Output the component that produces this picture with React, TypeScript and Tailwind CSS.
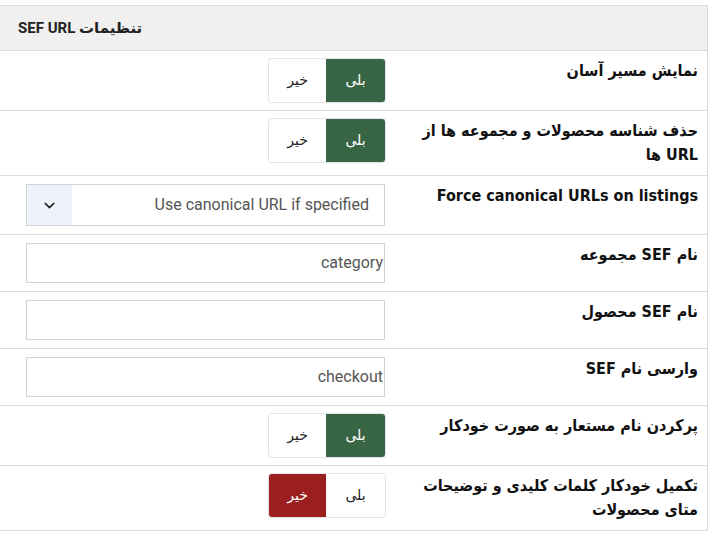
import React from "react";
import { ChevronDown } from "lucide-react";

function Toggle({ on }: { on: boolean }) {
  return (
    <div dir="rtl" className="flex h-[43px] w-[116px] rounded-[3px] overflow-hidden shadow-[0_0_0_1px_#e1e3e8,0_1px_2px_rgba(0,0,0,0.06)] text-[14px]">
      <div
        className={
          on
            ? "flex w-[59px] items-center justify-center bg-[#386543] text-white"
            : "flex w-[59px] items-center justify-center bg-white text-[#222]"
        }
      >
        بلی
      </div>
      <div
        className={
          on
            ? "flex flex-1 items-center justify-center bg-white text-[#222]"
            : "flex flex-1 items-center justify-center bg-[#9c1f1f] text-white"
        }
      >
        خیر
      </div>
    </div>
  );
}

function TextInput({ value }: { value: string }) {
  return (
    <div dir="rtl" className="flex h-[40px] w-[359px] items-center border border-[#ced2d9] bg-white pr-[1px] text-[16px] text-[#555]">
      {value}
    </div>
  );
}

function Select() {
  return (
    <div dir="rtl" className="flex h-[42px] w-[359px] border border-[#ced2d9] bg-white text-[16px] text-[#555]">
      <div className="flex flex-1 items-center pr-[15px]">Use canonical URL if specified</div>
      <div className="flex w-[45px] items-center justify-center bg-[#eef3fb] text-[#222]">
        <ChevronDown size={17} strokeWidth={2.2} />
      </div>
    </div>
  );
}

function Row({ label, children, last }: { label: React.ReactNode; children: React.ReactNode; last?: boolean }) {
  return (
    <div dir="rtl" className={"flex py-2" + (last ? "" : " border-b border-[#dcdcdc]")}>
      <div
        className="w-[314px] pr-[9px] pl-[5px] text-[16px] font-bold leading-[24px] text-[#111]"
        style={{ fontFamily: "'DejaVu Sans Condensed', 'DejaVu Sans', sans-serif" }}
      >
        {label}
      </div>
      <div className="mr-[8px] flex w-[359px] justify-start">{children}</div>
    </div>
  );
}

export default function App() {
  return (
    <div
      className="h-[538px] w-[713px] bg-white pt-[5px]"
      style={{ fontFamily: "Roboto, 'DejaVu Sans', sans-serif" }}
    >
      <div className="w-[708px] border-t border-r border-b border-[#dcdcdc]">
        <div dir="ltr" className="flex h-[45px] items-center border-b border-[#dcdcdc] bg-[#f0f0f0] pl-[18px] text-[15px] font-bold text-[#222]">
          <span dir="rtl">تنظیمات SEF URL</span>
        </div>
        <Row label="نمایش مسیر آسان">
          <Toggle on={true} />
        </Row>
        <Row label="حذف شناسه محصولات و مجموعه ها از URL ها">
          <Toggle on={true} />
        </Row>
        <Row label={<span dir="ltr">Force canonical URLs on listings</span>}>
          <Select />
        </Row>
        <Row label="نام SEF مجموعه">
          <TextInput value="category" />
        </Row>
        <Row label="نام SEF محصول">
          <TextInput value="" />
        </Row>
        <Row label="وارسی نام SEF">
          <TextInput value="checkout" />
        </Row>
        <Row label="پرکردن نام مستعار به صورت خودکار">
          <Toggle on={true} />
        </Row>
        <Row label="تکمیل خودکار کلمات کلیدی و توضیحات متای محصولات" last>
          <Toggle on={false} />
        </Row>
      </div>
    </div>
  );
}
